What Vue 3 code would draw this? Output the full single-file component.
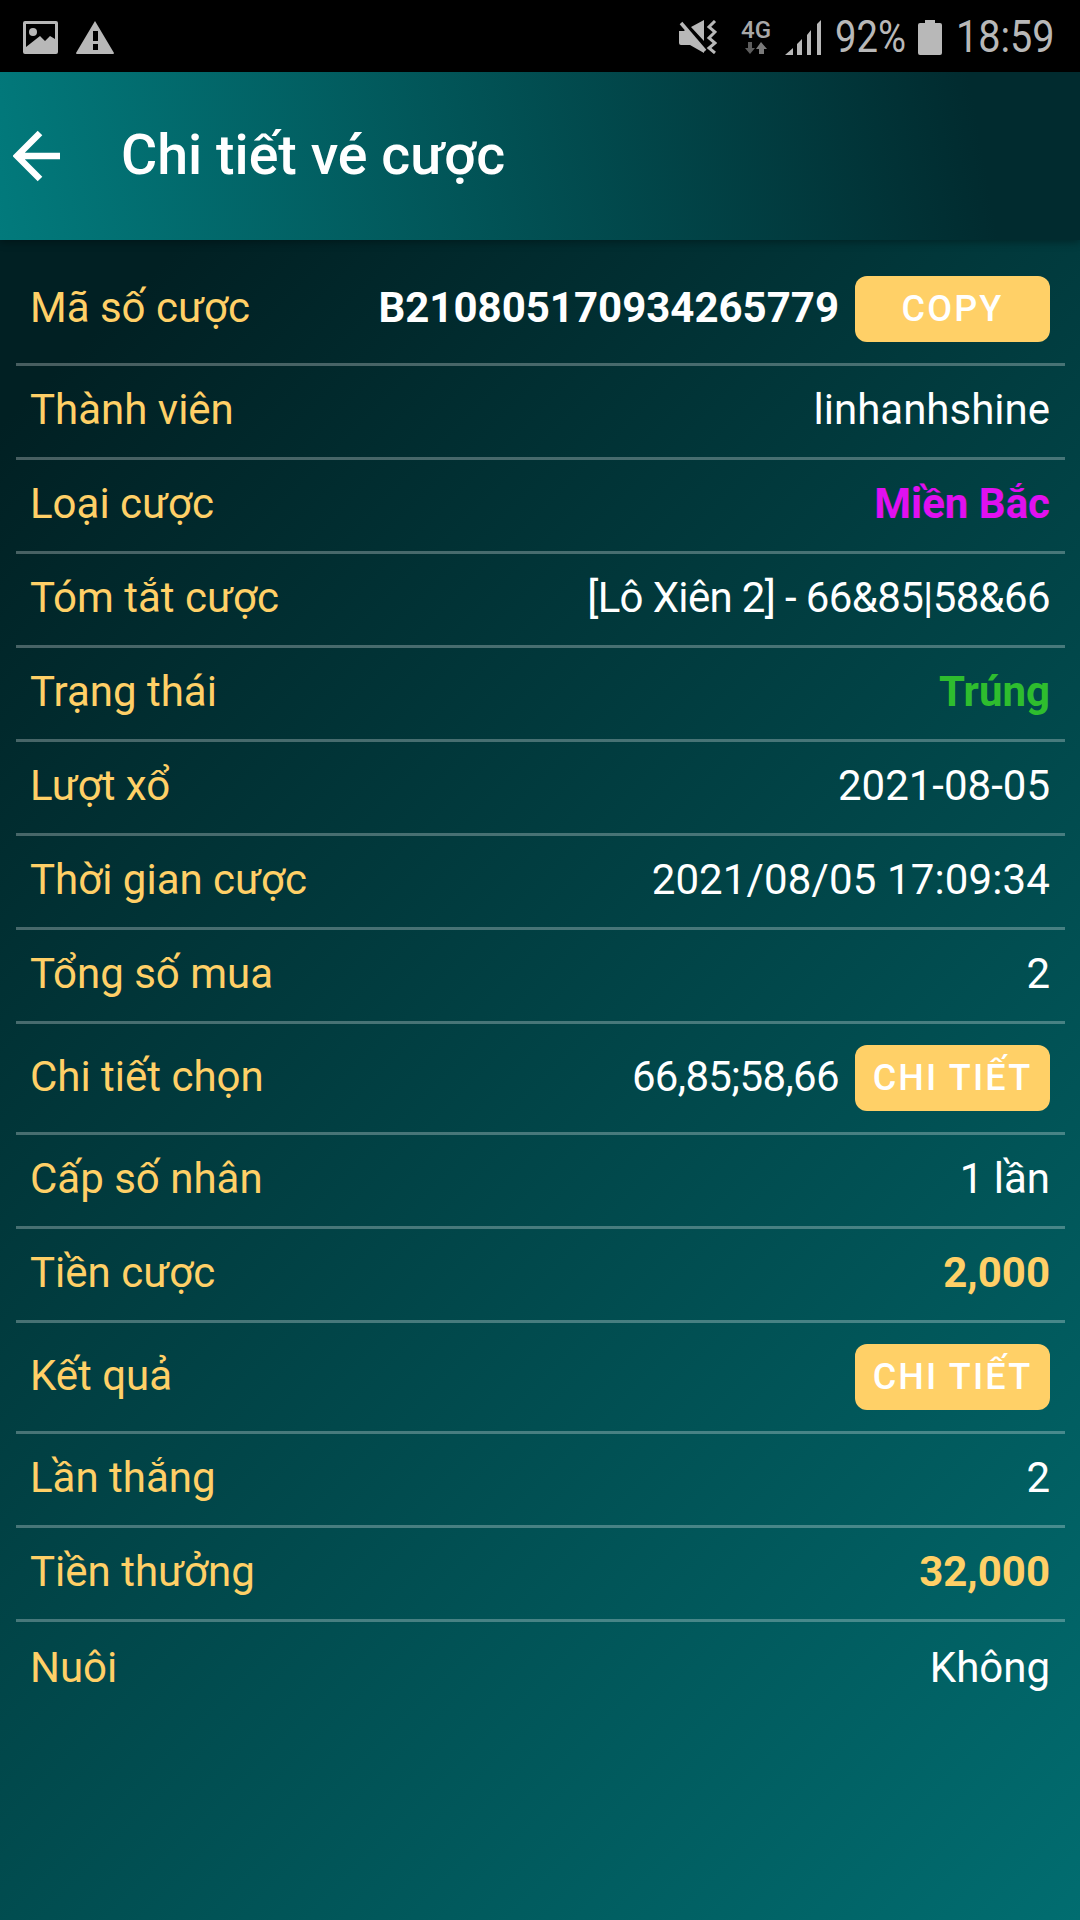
<template>
  <div class="page">
    <div class="status-bar">
      <div class="status-left">
        <svg viewBox="0 0 35 33" width="35" height="33">
          <path fill="#b8b8b8" fill-rule="evenodd" d="M2 0h31a2 2 0 0 1 2 2v29a2 2 0 0 1-2 2H2a2 2 0 0 1-2-2V2a2 2 0 0 1 2-2zM3 3v23l14-11 5 5 5-5 5 3V3z" />
          <circle cx="10" cy="11" r="4" fill="#b8b8b8" />
        </svg>
        <svg viewBox="0 0 38 33" width="38" height="33">
          <path fill="#b8b8b8" fill-rule="evenodd" d="M19 0l19 32a1 1 0 0 1-1 1H1a1 1 0 0 1-1-1zM17 10v10h5V10zM17 23v6h5v-6z" />
        </svg>
      </div>
      <div class="status-right">
        <svg class="ic-mute" viewBox="0 0 38 34" width="38" height="34">
          <path fill="#b8b8b8" d="M0 11h5l2-2 18 20v4L11 25H2a2 2 0 0 1-2-2zM12 7l13-7v21z" />
          <path stroke="#b8b8b8" stroke-width="3.5" fill="none" d="M2 3l24 28" />
          <path stroke="#b8b8b8" stroke-width="3" fill="none" d="M36 1l-6 6 6 5-6 6 6 5-6 5 6 5" />
        </svg>
        <div class="net">
          <span class="net-label">4G</span>
          <svg viewBox="0 0 22 12" width="22" height="12">
            <path fill="#5d5d5d" d="M5 12L0 6h3V0h4v6h3z" />
            <path fill="#7a7a7a" d="M16 0l6 7h-3v5h-5V7h-3z" />
          </svg>
        </div>
        <svg class="ic-signal" viewBox="0 0 36 35" width="36" height="35">
          <path fill="#b8b8b8" d="M0 35l8-7v7zM12 35V24l5-5v16zM22 35V15l4-5v25zM32 35V4l4-4v35z" />
        </svg>
        <span class="st-text pct">92%</span>
        <svg class="ic-batt" viewBox="0 0 24 35" width="24" height="35">
          <path fill="#b8b8b8" d="M7 0h10v3h5a2 2 0 0 1 2 2v28a2 2 0 0 1-2 2H2a2 2 0 0 1-2-2V5a2 2 0 0 1 2-2h5z" />
        </svg>
        <span class="st-text clock">18:59</span>
      </div>
    </div>

    <div class="content">
      <header class="app-bar">
        <svg class="back" viewBox="0 0 48 52" width="48" height="52">
          <path fill="none" stroke="#fff" stroke-width="6.5" d="M47 26H5M27 3L4 26l23 23" />
        </svg>
        <h1 class="title">Chi tiết vé cược</h1>
      </header>

      <div class="rows">
        <div v-for="row in rows" :key="row.label" class="row" :class="{ tall: row.button }">
          <span class="label">{{ row.label }}</span>
          <div class="value-wrap">
            <span v-if="row.value" class="value" :class="row.cls">{{ row.value }}</span>
            <button v-if="row.button" class="btn" type="button">{{ row.button }}</button>
          </div>
        </div>
      </div>
    </div>
  </div>
</template>

<script setup>
const rows = [
  { label: 'Mã số cược', value: 'B210805170934265779', cls: 'bold', button: 'COPY' },
  { label: 'Thành viên', value: 'linhanhshine' },
  { label: 'Loại cược', value: 'Miền Bắc', cls: 'bold magenta' },
  { label: 'Tóm tắt cược', value: '[Lô Xiên 2] - 66&85|58&66', cls: 'tight' },
  { label: 'Trạng thái', value: 'Trúng', cls: 'bold green' },
  { label: 'Lượt xổ', value: '2021-08-05' },
  { label: 'Thời gian cược', value: '2021/08/05 17:09:34', cls: 'wide' },
  { label: 'Tổng số mua', value: '2' },
  { label: 'Chi tiết chọn', value: '66,85;58,66', cls: 'tight', button: 'CHI TIẾT' },
  { label: 'Cấp số nhân', value: '1 lần' },
  { label: 'Tiền cược', value: '2,000', cls: 'bold gold' },
  { label: 'Kết quả', button: 'CHI TIẾT' },
  { label: 'Lần thắng', value: '2' },
  { label: 'Tiền thưởng', value: '32,000', cls: 'bold gold' },
  { label: 'Nuôi', value: 'Không' },
]
</script>

<style scoped>
.page {
  width: 1080px;
  height: 1920px;
  display: flex;
  flex-direction: column;
  overflow: hidden;
  font-family: Roboto, "Noto Sans", sans-serif;
  background: #000;
}

.status-bar {
  height: 72px;
  box-sizing: border-box;
  flex: none;
  display: flex;
  justify-content: space-between;
  align-items: center;
  padding: 2px 29px 0 23px;
  background: #000;
}

.status-left {
  display: flex;
  align-items: center;
  gap: 18px;
}

.status-right {
  display: flex;
  align-items: center;
}

.ic-mute {
  margin-right: 25px;
}

.net {
  width: 28px;
  display: flex;
  flex-direction: column;
  align-items: center;
  gap: 3px;
  margin-right: 15px;
}

.net-label {
  font-size: 24px;
  line-height: 18px;
  font-weight: 500;
  color: #a8a8a8;
}

.ic-signal {
  margin-right: 14px;
}

.st-text {
  font-size: 45px;
  line-height: 70px;
  color: #b8b8b8;
  transform: scaleX(0.88);
  transform-origin: left center;
}

.pct {
  width: 70px;
  margin-right: 13px;
  transform: scaleX(0.85);
}

.clock {
  width: 95px;
}

.ic-batt {
  margin-right: 14px;
}

.content {
  flex: 1;
  display: flex;
  flex-direction: column;
  background: linear-gradient(135deg, #012023 12%, #016d70 100%);
}

.app-bar {
  height: 168px;
  flex: none;
  display: flex;
  align-items: center;
  background: linear-gradient(80deg, #027a7c 0%, #012b2f 90%);
  box-shadow: 0 2px 8px rgba(0, 0, 0, 0.35);
}

.back {
  margin-left: 13px;
}

.title {
  margin: 0 0 2px 60px;
  font-size: 55.5px;
  font-weight: 500;
  color: #fff;
}

.rows {
  padding: 15px 15px 0 16px;
}

.row {
  height: 94px;
  box-sizing: border-box;
  display: flex;
  justify-content: space-between;
  align-items: center;
  padding: 0 15px 0 14px;
  border-bottom: 3px solid rgba(255, 255, 255, 0.28);
}

.row.tall {
  height: 111px;
}

.row:last-child {
  border-bottom: none;
}

.label {
  margin-bottom: 4px;
  font-size: 42px;
  color: #ffd067;
}

.value-wrap {
  display: flex;
  align-items: center;
  gap: 16px;
}

.value {
  margin-bottom: 4px;
  font-size: 42px;
  color: #fff;
}

.tight {
  letter-spacing: -0.65px;
}

.wide {
  letter-spacing: 0.13px;
}

.bold {
  font-weight: 700;
}

.magenta {
  color: #e010f0;
}

.green {
  color: #2ebd2e;
}

.gold {
  color: #ffd067;
}

.btn {
  width: 195px;
  height: 66px;
  border: none;
  border-radius: 12px;
  padding: 0;
  background: #ffd067;
  color: #fff;
  font-family: inherit;
  font-size: 36px;
  font-weight: 500;
  letter-spacing: 2.2px;
}
</style>
